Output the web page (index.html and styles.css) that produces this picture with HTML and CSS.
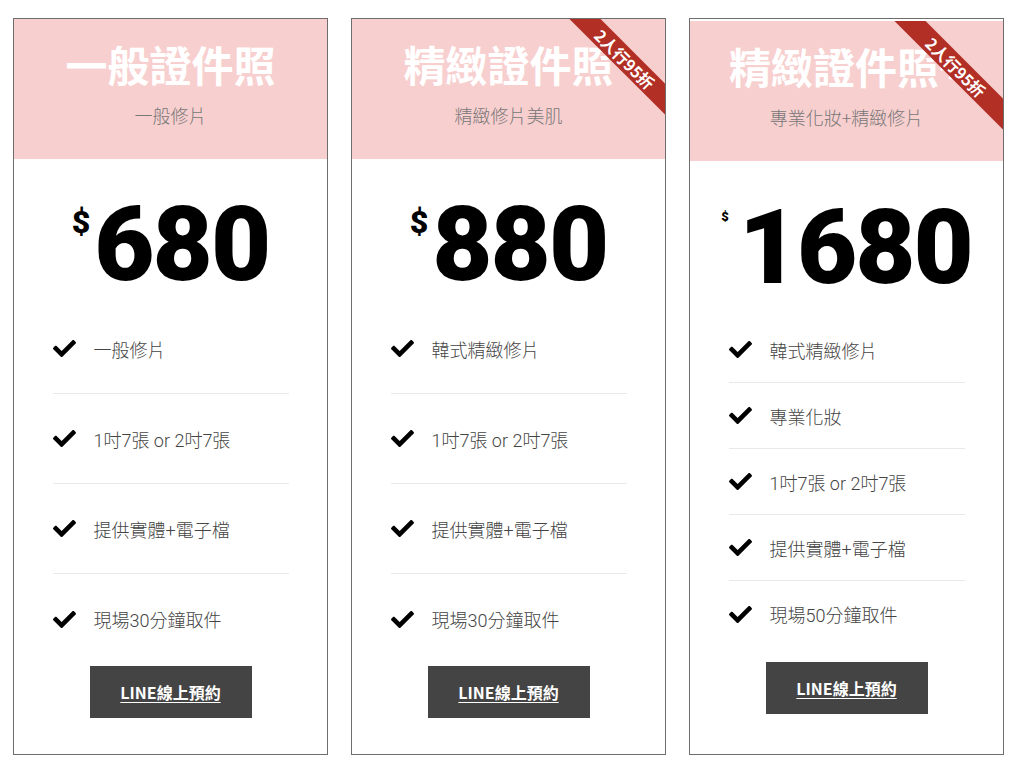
FILE: index.html
```html
<!DOCTYPE html>
<html lang="zh-Hant">
<head>
<meta charset="utf-8">
<title>證件照價目</title>
<link rel="stylesheet" href="styles.css">
</head>
<body>
<div class="plans">
  <section class="card card--basic">
    <header class="head">
      <h2 class="title">一般證件照</h2>
      <p class="sub">一般修片</p>
    </header>
    <div class="price"><span class="cur">$</span><span class="amt">680</span></div>
    <ul class="feats">
      <li class="feat"><svg class="chk" viewBox="0 0 512 512"><path d="M173.9 439.4l-166.4-166.4c-10-10-10-26.2 0-36.2l36.2-36.2c10-10 26.2-10 36.2 0L192 312.7 432.1 72.6c10-10 26.2-10 36.2 0l36.2 36.2c10 10 10 26.2 0 36.2l-294.4 294.4c-10 10-26.2 10-36.2 0z"/></svg><span>一般修片</span></li>
      <li class="feat"><svg class="chk" viewBox="0 0 512 512"><path d="M173.9 439.4l-166.4-166.4c-10-10-10-26.2 0-36.2l36.2-36.2c10-10 26.2-10 36.2 0L192 312.7 432.1 72.6c10-10 26.2-10 36.2 0l36.2 36.2c10 10 10 26.2 0 36.2l-294.4 294.4c-10 10-26.2 10-36.2 0z"/></svg><span>1吋7張 or 2吋7張</span></li>
      <li class="feat"><svg class="chk" viewBox="0 0 512 512"><path d="M173.9 439.4l-166.4-166.4c-10-10-10-26.2 0-36.2l36.2-36.2c10-10 26.2-10 36.2 0L192 312.7 432.1 72.6c10-10 26.2-10 36.2 0l36.2 36.2c10 10 10 26.2 0 36.2l-294.4 294.4c-10 10-26.2 10-36.2 0z"/></svg><span>提供實體+電子檔</span></li>
      <li class="feat"><svg class="chk" viewBox="0 0 512 512"><path d="M173.9 439.4l-166.4-166.4c-10-10-10-26.2 0-36.2l36.2-36.2c10-10 26.2-10 36.2 0L192 312.7 432.1 72.6c10-10 26.2-10 36.2 0l36.2 36.2c10 10 10 26.2 0 36.2l-294.4 294.4c-10 10-26.2 10-36.2 0z"/></svg><span>現場30分鐘取件</span></li>
    </ul>
    <a class="btn" href="#">LINE線上預約</a>
  </section>

  <section class="card card--fine">
    <header class="head">
      <h2 class="title">精緻證件照</h2>
      <p class="sub">精緻修片美肌</p>
      <div class="ribbon">2人行95折</div>
    </header>
    <div class="price"><span class="cur">$</span><span class="amt">880</span></div>
    <ul class="feats">
      <li class="feat"><svg class="chk" viewBox="0 0 512 512"><path d="M173.9 439.4l-166.4-166.4c-10-10-10-26.2 0-36.2l36.2-36.2c10-10 26.2-10 36.2 0L192 312.7 432.1 72.6c10-10 26.2-10 36.2 0l36.2 36.2c10 10 10 26.2 0 36.2l-294.4 294.4c-10 10-26.2 10-36.2 0z"/></svg><span>韓式精緻修片</span></li>
      <li class="feat"><svg class="chk" viewBox="0 0 512 512"><path d="M173.9 439.4l-166.4-166.4c-10-10-10-26.2 0-36.2l36.2-36.2c10-10 26.2-10 36.2 0L192 312.7 432.1 72.6c10-10 26.2-10 36.2 0l36.2 36.2c10 10 10 26.2 0 36.2l-294.4 294.4c-10 10-26.2 10-36.2 0z"/></svg><span>1吋7張 or 2吋7張</span></li>
      <li class="feat"><svg class="chk" viewBox="0 0 512 512"><path d="M173.9 439.4l-166.4-166.4c-10-10-10-26.2 0-36.2l36.2-36.2c10-10 26.2-10 36.2 0L192 312.7 432.1 72.6c10-10 26.2-10 36.2 0l36.2 36.2c10 10 10 26.2 0 36.2l-294.4 294.4c-10 10-26.2 10-36.2 0z"/></svg><span>提供實體+電子檔</span></li>
      <li class="feat"><svg class="chk" viewBox="0 0 512 512"><path d="M173.9 439.4l-166.4-166.4c-10-10-10-26.2 0-36.2l36.2-36.2c10-10 26.2-10 36.2 0L192 312.7 432.1 72.6c10-10 26.2-10 36.2 0l36.2 36.2c10 10 10 26.2 0 36.2l-294.4 294.4c-10 10-26.2 10-36.2 0z"/></svg><span>現場30分鐘取件</span></li>
    </ul>
    <a class="btn" href="#">LINE線上預約</a>
  </section>

  <section class="card card--pro">
    <header class="head">
      <h2 class="title">精緻證件照+</h2>
      <p class="sub">專業化妝+精緻修片</p>
      <div class="ribbon">2人行95折</div>
    </header>
    <div class="price"><span class="cur">$</span><span class="amt">1680</span></div>
    <ul class="feats">
      <li class="feat"><svg class="chk" viewBox="0 0 512 512"><path d="M173.9 439.4l-166.4-166.4c-10-10-10-26.2 0-36.2l36.2-36.2c10-10 26.2-10 36.2 0L192 312.7 432.1 72.6c10-10 26.2-10 36.2 0l36.2 36.2c10 10 10 26.2 0 36.2l-294.4 294.4c-10 10-26.2 10-36.2 0z"/></svg><span>韓式精緻修片</span></li>
      <li class="feat"><svg class="chk" viewBox="0 0 512 512"><path d="M173.9 439.4l-166.4-166.4c-10-10-10-26.2 0-36.2l36.2-36.2c10-10 26.2-10 36.2 0L192 312.7 432.1 72.6c10-10 26.2-10 36.2 0l36.2 36.2c10 10 10 26.2 0 36.2l-294.4 294.4c-10 10-26.2 10-36.2 0z"/></svg><span>專業化妝</span></li>
      <li class="feat"><svg class="chk" viewBox="0 0 512 512"><path d="M173.9 439.4l-166.4-166.4c-10-10-10-26.2 0-36.2l36.2-36.2c10-10 26.2-10 36.2 0L192 312.7 432.1 72.6c10-10 26.2-10 36.2 0l36.2 36.2c10 10 10 26.2 0 36.2l-294.4 294.4c-10 10-26.2 10-36.2 0z"/></svg><span>1吋7張 or 2吋7張</span></li>
      <li class="feat"><svg class="chk" viewBox="0 0 512 512"><path d="M173.9 439.4l-166.4-166.4c-10-10-10-26.2 0-36.2l36.2-36.2c10-10 26.2-10 36.2 0L192 312.7 432.1 72.6c10-10 26.2-10 36.2 0l36.2 36.2c10 10 10 26.2 0 36.2l-294.4 294.4c-10 10-26.2 10-36.2 0z"/></svg><span>提供實體+電子檔</span></li>
      <li class="feat"><svg class="chk" viewBox="0 0 512 512"><path d="M173.9 439.4l-166.4-166.4c-10-10-10-26.2 0-36.2l36.2-36.2c10-10 26.2-10 36.2 0L192 312.7 432.1 72.6c10-10 26.2-10 36.2 0l36.2 36.2c10 10 10 26.2 0 36.2l-294.4 294.4c-10 10-26.2 10-36.2 0z"/></svg><span>現場50分鐘取件</span></li>
    </ul>
    <a class="btn" href="#">LINE線上預約</a>
  </section>
</div>
</body>
</html>
```

FILE: styles.css
```css
* { box-sizing: border-box; }
html, body { margin: 0; padding: 0; background: #fff; }
body {
  font-family: "Noto Sans CJK TC", "Noto Sans", sans-serif;
  color: #333;
}
.plans {
  display: flex;
  gap: 23px;
  padding: 18px 0 0 13px;
}
.card {
  width: 315px;
  height: 737px;
  border: 1px solid #6e6e6e;
  display: flex;
  flex-direction: column;
  align-items: center;
  background: #fff;
}
.head {
  position: relative;
  overflow: hidden;
  align-self: stretch;
  height: 140px;
  background: #f7cfcf;
  text-align: center;
  padding-top: 20px;
}
.card--pro .head { margin-top: 2px; }
.title {
  margin: 0;
  font-size: 42px;
  line-height: 50px;
  font-weight: 700;
  color: #fff;
  white-space: nowrap;
}
.sub {
  margin: 14px 0 0;
  font-size: 18px;
  line-height: 24px;
  font-weight: 300;
  color: #777;
}
.ribbon {
  position: absolute;
  top: 29px;
  right: -45px;
  width: 170px;
  height: 22px;
  line-height: 22px;
  background: #b22f25;
  color: #fff;
  font-size: 16px;
  font-weight: 700;
  text-align: center;
  transform: rotate(45deg);
}
.card--pro .ribbon {
  top: 35px;
  right: -38px;
}
.price {
  display: flex;
  align-items: flex-start;
  justify-content: center;
  padding: 34px 0 7px;
  font-family: Roboto, "Liberation Sans", sans-serif;
  font-weight: 900;
  color: #000;
}
.cur {
  font-size: 32px;
  line-height: 40px;
  margin-top: 9px;
  margin-right: 4px;
}
.amt {
  font-size: 104px;
  line-height: 104px;
  letter-spacing: -2px;
}
.card--pro .price { padding: 35px 0 17px; }
.card--pro .cur {
  font-size: 13px;
  line-height: 16px;
  margin-top: 13px;
  margin-right: 10px;
}
.feats {
  list-style: none;
  margin: 0;
  padding: 0;
  width: 236px;
}
.feat {
  display: flex;
  align-items: center;
  height: 90px;
  border-bottom: 1px solid #e9e9e9;
  font-family: Roboto, "Noto Sans CJK TC", sans-serif;
  font-size: 18px;
  font-weight: 300;
  color: #444;
}
.feat:last-child { border-bottom: 0; }
.card--pro .feat { height: 66px; }
.chk {
  width: 23px;
  height: 23px;
  flex: none;
  margin-right: 18px;
  fill: #000;
}
.btn {
  display: block;
  width: 162px;
  height: 52px;
  margin-top: 2px;
  background: #444;
  color: #fff;
  font-size: 16px;
  font-weight: 700;
  line-height: 52px;
  text-align: center;
  text-decoration: underline;
  text-underline-offset: 3px;
}
.card--pro .btn { margin-top: 15px; }
```
